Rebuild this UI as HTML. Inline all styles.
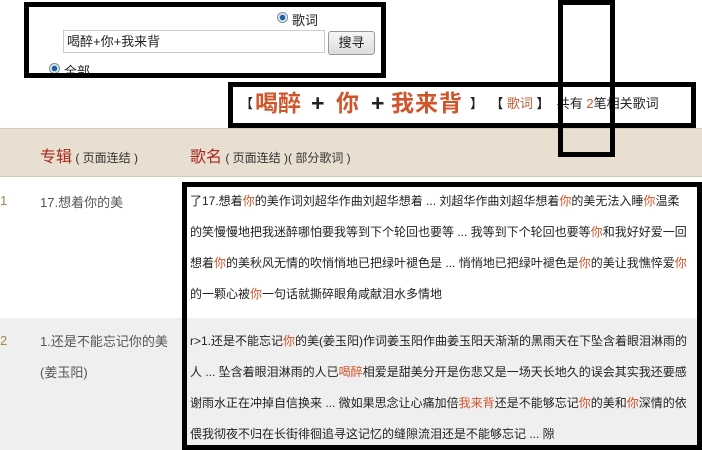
<!DOCTYPE html>
<html><head><meta charset="utf-8"><style>
*{margin:0;padding:0;box-sizing:border-box}
body{width:702px;height:450px;position:relative;overflow:hidden;background:#fff;font-family:"Liberation Sans","Noto Sans CJK SC",sans-serif;color:#222}
.a{position:absolute;white-space:nowrap}
.box{position:absolute;border:5px solid #000}
.o{color:#d0552a}
.big{position:absolute;top:88px;font-size:23px;font-weight:bold;line-height:30px;white-space:nowrap}
.lyr{position:absolute;font-size:12px;line-height:31px;color:#222;white-space:nowrap}
.radio{position:absolute;width:11px;height:11px;border-radius:50%;border:1px solid #7a8a9a;background:radial-gradient(circle,#1f5fa0 0 2.5px,#cfe0ef 3px,#fff 5px)}
</style></head><body>
<div class="a" style="left:0;top:128px;width:702px;height:49px;background:#e8dfd1;border-top:1px solid #d8ccb8;border-bottom:1px solid #d6cbb9"></div>
<div class="a" style="left:0;top:318px;width:702px;height:132px;background:#efefef"></div>

<div class="radio" style="left:277px;top:12px"></div>
<div class="a" style="left:292px;top:10px;font-size:13px">歌词</div>
<div class="a" style="left:63px;top:30px;width:262px;height:23px;border:1px solid #ccc;background:#fff;font-size:13px;line-height:21px;padding-left:3px">喝醉+你+我来背</div>
<div class="a" style="left:328px;top:31px;width:47px;height:24px;border:1px solid #999;border-radius:3px;background:linear-gradient(#f6f6f6,#dcdcdc);font-size:13px;line-height:22px;text-align:center">搜寻</div>
<div class="radio" style="left:49px;top:63px"></div>
<div class="a" style="left:64px;top:61px;font-size:13px">全部</div>

<div class="a" style="left:240px;top:90px;font-size:13px;line-height:28px"><b>【</b></div>
<div class="big o" style="left:255px">喝醉</div>
<div class="big" style="left:311px">+</div>
<div class="big o" style="left:336px">你</div>
<div class="big" style="left:371px">+</div>
<div class="big o" style="left:391px;letter-spacing:1px">我来背</div>
<div class="a" style="left:470px;top:90px;font-size:13px;line-height:28px"><b>】</b> &nbsp;<b>【</b> <span style="color:#b8603a">歌词</span> <b>】</b> &nbsp;共有 <span class="o">2</span>笔相关歌词</div>

<div class="a" style="left:40px;top:143px;font-size:16px;color:#a8281e">专辑<span style="font-size:12px;color:#333"> ( 页面连结 )</span></div>
<div class="a" style="left:190px;top:143px;font-size:16px;color:#a8281e">歌名<span style="font-size:12px;color:#333"> ( 页面连结 )( 部分歌词 )</span></div>

<div class="a" style="left:0;top:193px;font-size:13px;color:#a8844e">1</div>
<div class="a" style="left:40px;top:192px;font-size:13px;color:#555">17.想着你的美</div>
<div class="a" style="left:0;top:333px;font-size:13px;color:#a8844e">2</div>
<div class="a" style="left:40px;top:326px;font-size:13px;color:#555;line-height:31px">1.还是不能忘记你的美<br>(姜玉阳)</div>

<div class="lyr" style="left:190px;top:186px">了17.想着<span class="o">你</span>的美作词刘超华作曲刘超华想着 ... 刘超华作曲刘超华想着<span class="o">你</span>的美无法入睡<span class="o">你</span>温柔<br>的笑慢慢地把我迷醉哪怕要我等到下个轮回也要等 ... 我等到下个轮回也要等<span class="o">你</span>和我好好爱一回<br>想着<span class="o">你</span>的美秋风无情的吹悄悄地已把绿叶褪色是 ... 悄悄地已把绿叶褪色是<span class="o">你</span>的美让我憔悴爱<span class="o">你</span><br>的一颗心被<span class="o">你</span>一句话就撕碎眼角咸献泪水多情地</div>
<div class="lyr" style="left:190px;top:326px">r&gt;1.还是不能忘记<span class="o">你</span>的美(姜玉阳)作词姜玉阳作曲姜玉阳天渐渐的黑雨天在下坠含着眼泪淋雨的<br>人 ... 坠含着眼泪淋雨的人已<span class="o">喝醉</span>相爱是甜美分开是伤悲又是一场天长地久的误会其实我还要感<br>谢雨水正在冲掉自信换来 ... 微如果思念让心痛加倍<span class="o">我来背</span>还是不能够忘记<span class="o">你</span>的美和<span class="o">你</span>深情的依<br>偎我彻夜不归在长街徘徊追寻这记忆的缝隙流泪还是不能够忘记 ... 隙</div>

<div class="box" style="left:24px;top:2px;width:362px;height:76px"></div>
<div class="box" style="left:228px;top:82px;width:468px;height:46px"></div>
<div class="box" style="left:558px;top:0;width:57px;height:157px"></div>
<div class="box" style="left:182px;top:182px;width:520px;height:268px"></div>
</body></html>
